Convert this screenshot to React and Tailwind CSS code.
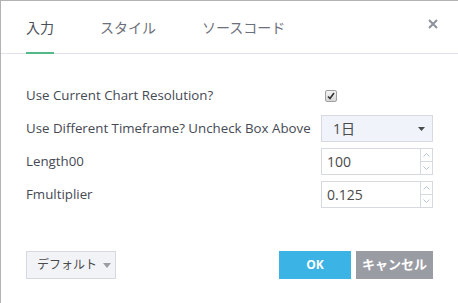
import React, { useState } from 'react';

const font = { fontFamily: '"Open Sans", "Noto Sans CJK JP", sans-serif' };

const Spinner = () => (
    <div className="flex flex-col w-[12px] border-l border-[#d6d9e0]">
        <div className="flex-1 flex items-center justify-center border-b border-[#d6d9e0]">
            <svg width="7" height="4" viewBox="0 0 7 4"><path d="M0.5 3.5 L3.5 0.5 L6.5 3.5" fill="none" stroke="#b8c4d4" strokeWidth="1" /></svg>
        </div>
        <div className="flex-1 flex items-center justify-center">
            <svg width="7" height="4" viewBox="0 0 7 4"><path d="M0.5 0.5 L3.5 3.5 L6.5 0.5" fill="none" stroke="#b8c4d4" strokeWidth="1" /></svg>
        </div>
    </div>
);

const NumberInput = ({ value }) => (
    <div className="flex w-[112px] h-[27px] border border-[#d6d9e0] bg-white">
        <div className="flex-1 flex items-center pl-[5px] text-[14px] text-[#4a4a4a]">{value}</div>
        <Spinner />
    </div>
);

const Row = ({ label, children }) => (
    <div className="flex items-center h-[27px]">
        <div className="w-[295px] text-[13.3px] text-[#454a54] whitespace-nowrap">{label}</div>
        {children}
    </div>
);

const App = () => {
    const [tab] = useState(0);
    const tabs = ['入力', 'スタイル', 'ソースコード'];

    return (
        <div className="w-[458px] h-[303px] bg-white border-t border-l border-[#b3b3b3] overflow-hidden" style={font}>
            {/* Header */}
            <div className="flex items-end h-[53px] border-b border-[#e0e3eb] pl-[25px] pr-[20px] relative">
                {tabs.map((t, i) => (
                    <div
                        key={t}
                        className={`h-full flex items-center text-[14px] mr-[46px] -mb-px whitespace-nowrap ${i === tab ? 'text-[#4a4f5a] border-b-2 border-[#53b987]' : 'text-[#6c707a] border-b-2 border-transparent'}`}
                    >
                        {t}
                    </div>
                ))}
                <div className="absolute right-[20px] top-[18px]">
                    <svg width="10" height="10" viewBox="0 0 10 10"><path d="M1 1 L9 9 M9 1 L1 9" stroke="#8d919b" strokeWidth="2" /></svg>
                </div>
            </div>

            {/* Body */}
            <div className="pl-[25px] pt-[28px] flex flex-col gap-[6px]">
                <Row label="Use Current Chart Resolution?">
                    <div className="w-[12px] h-[12px] ml-[4px] border border-[#a0a0a0] rounded-[2px] bg-gradient-to-b from-[#f4f4f4] to-[#d8d8d8] flex items-center justify-center">
                        <svg width="8" height="8" viewBox="0 0 8 8"><path d="M1 4.5 L3 6.5 L7 1" fill="none" stroke="#333" strokeWidth="1.6" /></svg>
                    </div>
                </Row>
                <Row label="Use Different Timeframe? Uncheck Box Above">
                    <div className="flex items-center justify-between w-[112px] h-[27px] border border-[#d6d9e0] bg-[#f0f3fa] pl-[11px] pr-[7px]">
                        <span className="text-[14px] text-[#4a4a4a]">1日</span>
                        <svg width="7" height="4" viewBox="0 0 7 4"><path d="M0 0 L7 0 L3.5 4 Z" fill="#4a4a4a" /></svg>
                    </div>
                </Row>
                <Row label="Length00">
                    <NumberInput value="100" />
                </Row>
                <Row label="Fmultiplier">
                    <NumberInput value="0.125" />
                </Row>
            </div>

            {/* Footer */}
            <div className="flex items-center mt-[43px] pl-[25px] pr-[25px]">
                <div className="flex items-center h-[28px] w-[90px] border border-[#d6d9e0] bg-[#f2f3f7] pl-[10px] gap-[6px] text-[12px] text-[#4a4a4a] whitespace-nowrap">
                    デフォルト
                    <svg width="8" height="5" viewBox="0 0 8 5"><path d="M0 0 L8 0 L4 5 Z" fill="#9a9da5" /></svg>
                </div>
                <div className="flex-1" />
                <button className="h-[28px] w-[72px] bg-[#3bb3e4] text-white text-[12px] font-bold">OK</button>
                <button className="h-[28px] w-[77px] ml-[5px] bg-[#9a9ca4] text-white text-[13px] font-bold whitespace-nowrap">キャンセル</button>
            </div>
        </div>
    );
};

export default App;
